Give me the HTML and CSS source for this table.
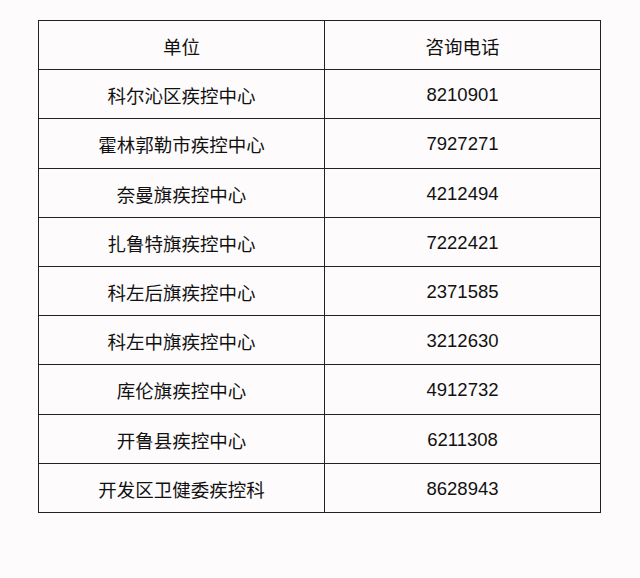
FILE: index.html
```html
<!DOCTYPE html>
<html lang="zh">
<head>
<meta charset="utf-8">
<link rel="stylesheet" href="styles.css">
</head>
<body>
<table class="contacts">
  <tr><td class="unit">单位</td><td>咨询电话</td></tr>
  <tr><td class="unit">科尔沁区疾控中心</td><td>8210901</td></tr>
  <tr><td class="unit">霍林郭勒市疾控中心</td><td>7927271</td></tr>
  <tr><td class="unit">奈曼旗疾控中心</td><td>4212494</td></tr>
  <tr><td class="unit">扎鲁特旗疾控中心</td><td>7222421</td></tr>
  <tr><td class="unit">科左后旗疾控中心</td><td>2371585</td></tr>
  <tr><td class="unit">科左中旗疾控中心</td><td>3212630</td></tr>
  <tr><td class="unit">库伦旗疾控中心</td><td>4912732</td></tr>
  <tr><td class="unit">开鲁县疾控中心</td><td>6211308</td></tr>
  <tr><td class="unit">开发区卫健委疾控科</td><td>8628943</td></tr>
</table>
</body>
</html>
```
FILE: styles.css
```css
html, body {
  margin: 0;
  padding: 0;
  background: #fdfbfc;
}
body {
  padding: 20px 0 0 38px;
  font-family: "Liberation Sans", "Noto Sans CJK SC", sans-serif;
  font-size: 18.5px;
  color: #111;
}
.contacts {
  border-collapse: collapse;
  width: 563px;
  table-layout: fixed;
}
.contacts td {
  border: 1px solid #222;
  height: 46.2px;
  padding: 2px 0 0 0;
  text-align: center;
  vertical-align: middle;
}
.contacts td.unit {
  width: 285px;
}
```
